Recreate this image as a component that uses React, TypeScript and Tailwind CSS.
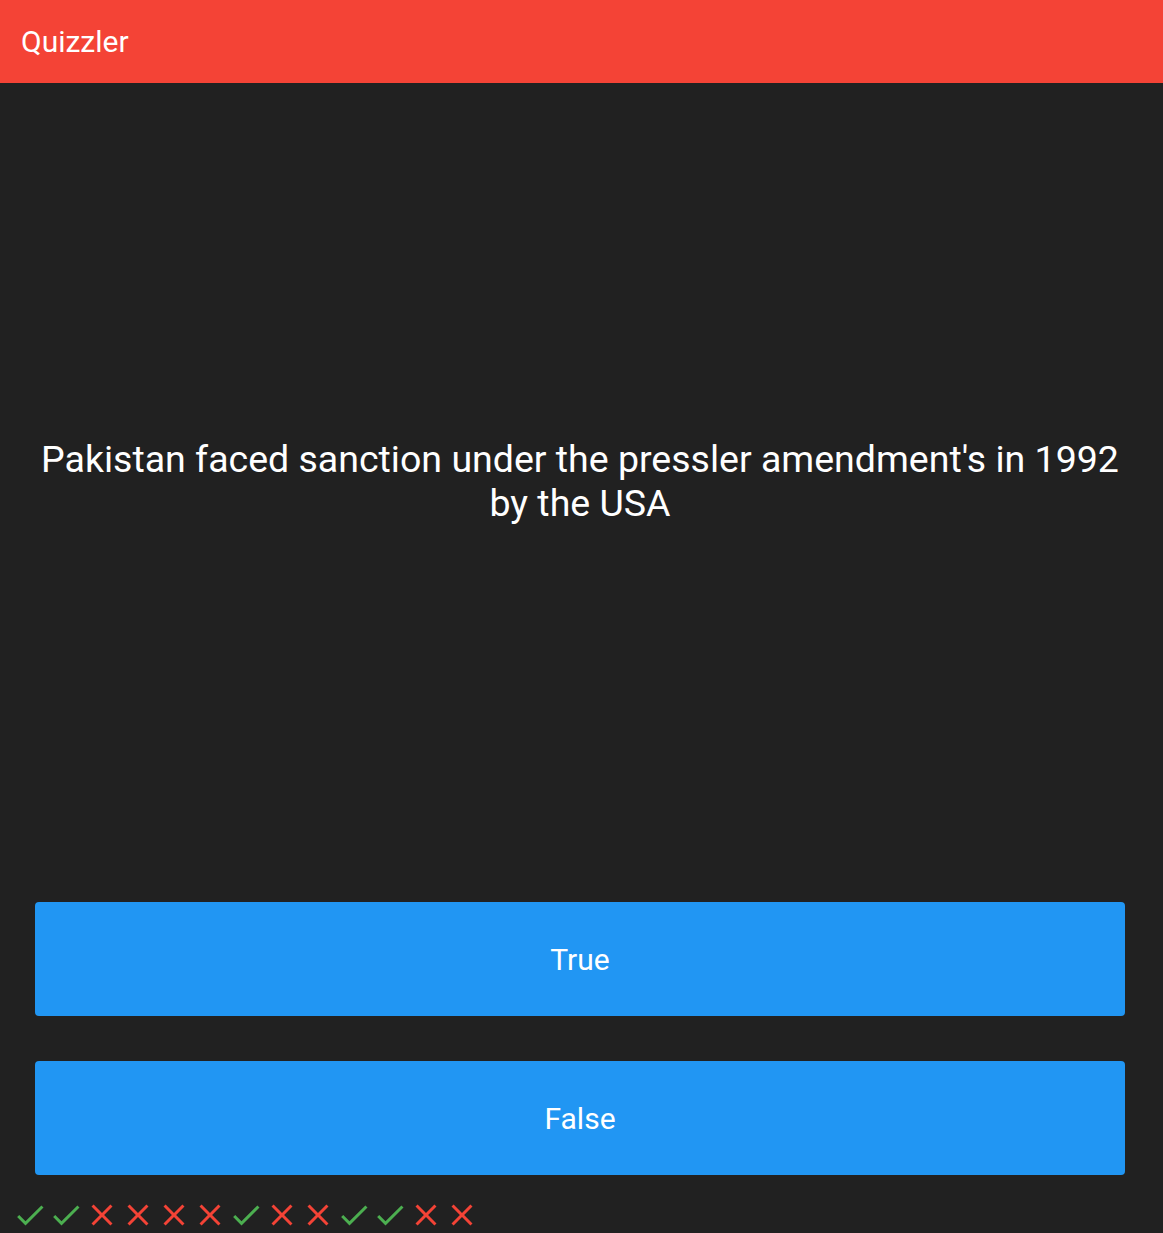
import React from 'react';

const scores = [true, true, false, false, false, false, true, false, false, true, true, false, false];

const CheckIcon = () => (
  <svg viewBox="0 0 24 24" className="w-[36px] h-[36px] shrink-0" fill="#4CAF50">
    <path d="M9 16.17L4.83 12l-1.42 1.41L9 19 21 7l-1.41-1.41z" />
  </svg>
);

const CloseIcon = () => (
  <svg viewBox="0 0 24 24" className="w-[36px] h-[36px] shrink-0" fill="#F44336">
    <path d="M19 6.41L17.59 5 12 10.59 6.41 5 5 6.41 10.59 12 5 17.59 6.41 19 12 13.41 17.59 19 19 17.59 13.41 12z" />
  </svg>
);

export default function App() {
  return (
    <div className="h-screen flex flex-col bg-[#212121] overflow-hidden font-['Roboto',sans-serif]">
      {/* App bar */}
      <header className="h-[83px] shrink-0 bg-[#F44336] flex items-center px-[21px]">
        <h1 className="text-white text-[30px] leading-none">Quizzler</h1>
      </header>

      <main className="flex-1 flex flex-col px-[12px] min-h-0">
        {/* Question */}
        <div className="flex-1 flex items-center justify-center pl-[17px] pr-[20px]">
          <p className="text-white text-[37.5px] leading-[44px] text-center">
            Pakistan faced sanction under the pressler amendment's in 1992 by the USA
          </p>
        </div>

        {/* Answers */}
        <div className="h-[159px] shrink-0 pl-[23px] pr-[26px] py-[22.5px]">
          <button className="w-full h-full bg-[#2196F3] rounded-[4px] text-white text-[30px] pt-[2px]">True</button>
        </div>
        <div className="h-[159px] shrink-0 pl-[23px] pr-[26px] py-[22.5px]">
          <button className="w-full h-full bg-[#2196F3] rounded-[4px] text-white text-[30px] pt-[2px]">False</button>
        </div>

        {/* Score keeper */}
        <div className="h-[36px] shrink-0 flex">
          {scores.map((s, i) => (s ? <CheckIcon key={i} /> : <CloseIcon key={i} />))}
        </div>
      </main>
    </div>
  );
}
